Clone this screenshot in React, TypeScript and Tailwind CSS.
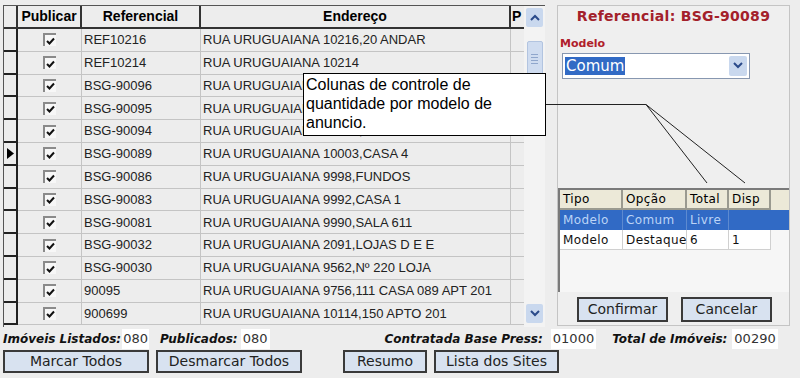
import React from 'react';

const rows = [
  ['REF10216', 'RUA URUGUAIANA 10216,20 ANDAR'],
  ['REF10214', 'RUA URUGUAIANA 10214'],
  ['BSG-90096', 'RUA URUGUAIANA 10211,CASA 2'],
  ['BSG-90095', 'RUA URUGUAIANA 10209,CASA 1'],
  ['BSG-90094', 'RUA URUGUAIANA 10005,CASA 2'],
  ['BSG-90089', 'RUA URUGUAIANA 10003,CASA 4'],
  ['BSG-90086', 'RUA URUGUAIANA 9998,FUNDOS'],
  ['BSG-90083', 'RUA URUGUAIANA 9992,CASA 1'],
  ['BSG-90081', 'RUA URUGUAIANA 9990,SALA 611'],
  ['BSG-90032', 'RUA URUGUAIANA 2091,LOJAS D E E'],
  ['BSG-90030', 'RUA URUGUAIANA 9562,Nº 220 LOJA'],
  ['90095', 'RUA URUGUAIANA 9756,111 CASA 089 APT 201'],
  ['900699', 'RUA URUGUAIANA 10114,150 APTO 201'],
];

const arial = { fontFamily: '"Liberation Sans", Arial, sans-serif' };
const verdana = { fontFamily: '"DejaVu Sans", Verdana, sans-serif' };

const Check = () => (
  <div className="w-[13px] h-[13px] border-t-2 border-l-2 border-[#8a8a8a] bg-[#f7f7f7] flex items-center justify-center">
    <svg width="9" height="8" viewBox="0 0 9 8">
      <path d="M1 4 L3.5 6.5 L8 1.5" fill="none" stroke="#111" strokeWidth="2" />
    </svg>
  </div>
);

const Chevron = ({ up }: { up?: boolean }) => (
  <svg width="10" height="7" viewBox="0 0 10 7">
    <path d={up ? 'M1 6 L5 2 L9 6' : 'M1 1 L5 5 L9 1'} fill="none" stroke="#2a4a8a" strokeWidth="2" />
  </svg>
);

const Btn = ({ label, w, h = 'h-[23px]' }: { label: string; w: string; h?: string }) => (
  <div
    className={`${w} ${h} border-2 border-[#3a3a3a] bg-[#d8e2f0] flex items-center justify-center text-[14px] text-[#222]`}
    style={verdana}
  >
    {label}
  </div>
);

export default function App() {
  return (
    <div className="relative w-[800px] h-[378px] bg-[#ededed] overflow-hidden">
      <div className="flex pt-[5px] pl-[3px]">
        {/* Grid */}
        <div className="w-[542px] h-[322px] border-l border-t border-[#555] flex bg-[#ededed]" style={arial}>
          <div className="w-[520px] flex flex-col">
            <div className="flex h-[23px] border-b-2 border-[#333] text-[14px] font-bold text-black">
              <div className="w-[14px] border-r-2 border-[#333]" />
              <div className="w-[64px] border-r-2 border-[#333] flex items-center justify-center">Publicar</div>
              <div className="w-[119px] border-r-2 border-[#333] flex items-center justify-center">Referencial</div>
              <div className="w-[310px] border-r-2 border-[#333] flex items-center justify-center">Endereço</div>
              <div className="w-[13px] overflow-hidden flex items-center pl-[1px]">P</div>
            </div>
            {rows.map(([ref, addr], i) => (
              <div key={ref} className="flex h-[22.8px] text-[13px] text-[#222]">
                <div className="w-[14px] border-b-2 border-[#222] border-r-2 flex items-center">
                  {i === 5 && (
                    <svg width="7" height="11" viewBox="0 0 7 11" className="ml-[3px]">
                      <path d="M0 0 L7 5.5 L0 11 Z" fill="#000" />
                    </svg>
                  )}
                </div>
                <div className="w-[64px] border-b border-r border-[#c4c4c4] flex items-center justify-center">
                  <Check />
                </div>
                <div className="w-[119px] border-b border-r border-[#c4c4c4] flex items-center pl-[2px]">{ref}</div>
                <div className="w-[310px] border-b border-r border-[#c4c4c4] flex items-center pl-[2px] whitespace-nowrap overflow-hidden">
                  {addr}
                </div>
                <div className="w-[13px] border-b border-[#c4c4c4]" />
              </div>
            ))}
          </div>
          {/* Scrollbar */}
          <div className="w-[22px] bg-[#f3f3f3] flex flex-col items-center py-[2px]">
            <div className="w-[17px] h-[19px] bg-[#c9d8ee] rounded-[2px] flex items-center justify-center">
              <Chevron up />
            </div>
            <div className="mt-[14px] w-[16px] h-[35px] bg-[#cfdcf0] border border-[#b2c4e0] rounded-[2px] flex flex-col items-center justify-center gap-[2px]">
              <div className="w-[7px] h-px bg-[#8fa6cc]" />
              <div className="w-[7px] h-px bg-[#8fa6cc]" />
              <div className="w-[7px] h-px bg-[#8fa6cc]" />
              <div className="w-[7px] h-px bg-[#8fa6cc]" />
            </div>
            <div className="flex-1" />
            <div className="w-[17px] h-[19px] bg-[#c9d8ee] rounded-[2px] flex items-center justify-center mb-[2px]">
              <Chevron />
            </div>
          </div>
        </div>

        {/* Right panel */}
        <div className="ml-[12px] w-[233px] h-[321px] border border-[#c4c4c4] bg-[#efefef] flex flex-col" style={verdana}>
          <div className="text-center text-[14px] font-bold text-[#a3202a] tracking-[0.3px]">Referencial: BSG-90089</div>
          <div className="text-[11px] font-bold text-[#b0202a] mt-[9px] ml-[2px]">Modelo</div>
          <div className="ml-[4px] w-[188px] h-[26px] bg-white border border-[#8797b0] flex items-center px-[2px]">
            <span className="bg-[#316ac5] text-white text-[15px] leading-[18px] px-[1px]">Comum</span>
            <div className="flex-1" />
            <div className="w-[18px] h-[20px] bg-[#c9d8ee] rounded-[2px] flex items-center justify-center">
              <Chevron />
            </div>
          </div>
          <div className="flex-1" />
          <div className="w-[231px] h-[104px] border-t-2 border-l-2 border-[#7a7a7a] bg-[#f6f6f6] text-[12px] tracking-[0.4px]">
            <div className="flex h-[20px] bg-[#ece9d8]">
              <div className="w-[63px] border-r-2 border-b-2 border-[#9a9a90] flex items-center pl-[3px]">Tipo</div>
              <div className="w-[64px] border-r-2 border-b-2 border-[#9a9a90] flex items-center pl-[3px]">Opção</div>
              <div className="w-[42px] border-r-2 border-b-2 border-[#9a9a90] flex items-center pl-[3px]">Total</div>
              <div className="w-[42px] border-r-2 border-b-2 border-[#9a9a90] flex items-center pl-[3px]">Disp</div>
            </div>
            <div className="flex h-[20px] bg-[#316ac5] text-[#bcd4f6]">
              <div className="w-[63px] border-r border-[#5d8ad0] flex items-center pl-[3px]">Modelo</div>
              <div className="w-[64px] border-r border-[#5d8ad0] flex items-center pl-[3px]">Comum</div>
              <div className="w-[42px] border-r border-[#5d8ad0] flex items-center pl-[3px]">Livre</div>
              <div className="w-[42px] flex items-center pl-[3px]" />
            </div>
            <div className="flex h-[20px] bg-white text-[#111] w-[211px] border-b border-[#d0d0d0]">
              <div className="w-[63px] border-r border-[#d0d0d0] flex items-center pl-[3px]">Modelo</div>
              <div className="w-[64px] border-r border-[#d0d0d0] flex items-center pl-[3px] whitespace-nowrap">Destaque</div>
              <div className="w-[42px] border-r border-[#d0d0d0] flex items-center pl-[3px]">6</div>
              <div className="w-[42px] border-r border-[#d0d0d0] flex items-center pl-[3px]">1</div>
            </div>
          </div>
          <div className="flex gap-[13px] pl-[19px] pt-[5px] pb-[3px]">
            <Btn label="Confirmar" w="w-[91px]" h="h-[25px]" />
            <Btn label="Cancelar" w="w-[91px]" h="h-[25px]" />
          </div>
        </div>
      </div>

      {/* Totals */}
      <div className="flex items-center h-[20px] mt-[2px] pl-[3px] text-[12px]" style={verdana}>
        <span className="font-bold italic text-[#111]">Imóveis Listados:</span>
        <span className="bg-white px-[1px] ml-[1px] text-[13px] text-[#333]">080</span>
        <span className="font-bold italic text-[#111] ml-[11px]">Publicados:</span>
        <span className="bg-white px-[2px] ml-[3px] text-[13px] text-[#333]">080</span>
        <span className="font-bold italic text-[#111] ml-[115px]">Contratada Base Press:</span>
        <span className="bg-white px-[2px] ml-[8px] text-[13px] text-[#333]">01000</span>
        <span className="font-bold italic text-[#111] ml-[16px]">Total de Imóveis:</span>
        <span className="bg-white px-[2px] ml-[5px] text-[13px] text-[#333]">00290</span>
      </div>
      <div className="flex mt-[1px] pl-[3px]">
        <Btn label="Marcar Todos" w="w-[146px]" />
        <div className="ml-[7px]"><Btn label="Desmarcar Todos" w="w-[146px]" /></div>
        <div className="ml-[41px]"><Btn label="Resumo" w="w-[84px]" /></div>
        <div className="ml-[7px]"><Btn label="Lista dos Sites" w="w-[125px]" /></div>
      </div>

      {/* Tooltip callout */}
      <div
        className="absolute left-[303px] top-[73px] w-[243px] h-[63px] bg-white border border-black px-[2px] pt-[1px] text-[16px] leading-[19px] text-black"
        style={arial}
      >
        Colunas de controle de
        <br />
        quantidade por modelo de
        <br />
        anuncio.
      </div>
      <svg className="absolute left-0 top-0" width="800" height="378" viewBox="0 0 800 378">
        <path d="M546 104.5 L646 104.5 L707 183 M646 104.5 L745 183" fill="none" stroke="#222" strokeWidth="1" />
      </svg>
    </div>
  );
}
